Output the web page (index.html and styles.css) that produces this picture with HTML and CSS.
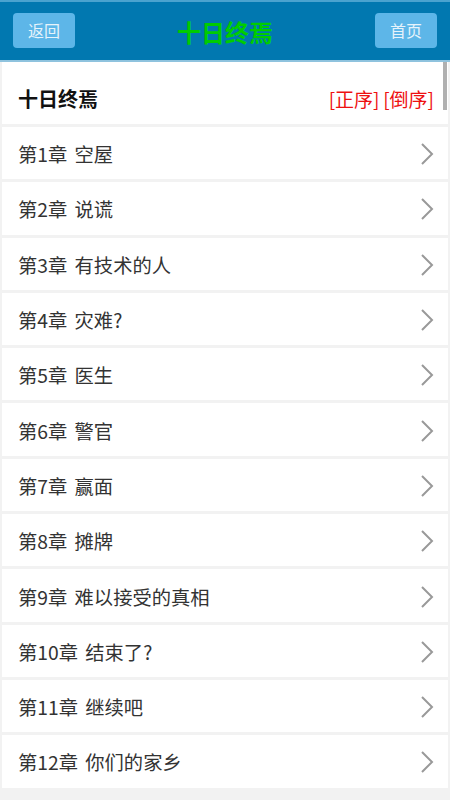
FILE: index.html
```html
<!DOCTYPE html>
<html lang="zh-CN">
<head>
    <meta charset="UTF-8">
    <meta name="viewport" content="width=device-width, initial-scale=1.0">
    <title>十日终焉</title>
    <link rel="stylesheet" href="styles.css">
</head>
<body>

    <header class="topbar">
        <a class="top-btn" href="#">返回</a>
        <h1>十日终焉</h1>
        <a class="top-btn" href="#">首页</a>
    </header>

    <div class="book-head">
        <h2>十日终焉</h2>
        <div class="order">
            <a href="#">[正序]</a>
            <a href="#">[倒序]</a>
        </div>
    </div>

    <ul class="chapters">
        <li><a href="#"><span>第1章 空屋</span><svg viewBox="0 0 14 24"><path d="M2 2 L12 12 L2 22"/></svg></a></li>
        <li><a href="#"><span>第2章 说谎</span><svg viewBox="0 0 14 24"><path d="M2 2 L12 12 L2 22"/></svg></a></li>
        <li><a href="#"><span>第3章 有技术的人</span><svg viewBox="0 0 14 24"><path d="M2 2 L12 12 L2 22"/></svg></a></li>
        <li><a href="#"><span>第4章 灾难?</span><svg viewBox="0 0 14 24"><path d="M2 2 L12 12 L2 22"/></svg></a></li>
        <li><a href="#"><span>第5章 医生</span><svg viewBox="0 0 14 24"><path d="M2 2 L12 12 L2 22"/></svg></a></li>
        <li><a href="#"><span>第6章 警官</span><svg viewBox="0 0 14 24"><path d="M2 2 L12 12 L2 22"/></svg></a></li>
        <li><a href="#"><span>第7章 赢面</span><svg viewBox="0 0 14 24"><path d="M2 2 L12 12 L2 22"/></svg></a></li>
        <li><a href="#"><span>第8章 摊牌</span><svg viewBox="0 0 14 24"><path d="M2 2 L12 12 L2 22"/></svg></a></li>
        <li><a href="#"><span>第9章 难以接受的真相</span><svg viewBox="0 0 14 24"><path d="M2 2 L12 12 L2 22"/></svg></a></li>
        <li><a href="#"><span>第10章 结束了?</span><svg viewBox="0 0 14 24"><path d="M2 2 L12 12 L2 22"/></svg></a></li>
        <li><a href="#"><span>第11章 继续吧</span><svg viewBox="0 0 14 24"><path d="M2 2 L12 12 L2 22"/></svg></a></li>
        <li><a href="#"><span>第12章 你们的家乡</span><svg viewBox="0 0 14 24"><path d="M2 2 L12 12 L2 22"/></svg></a></li>
    </ul>

    <div class="scroll-thumb"></div>

</body>
</html>
```

FILE: styles.css
```css
/* General styles */
body {
    margin: 0;
    padding: 0;
    background-color: #f2f2f2;
    color: #333;
    font-family: 'Noto Sans CJK SC', 'Liberation Sans', sans-serif;
}

a {
    text-decoration: none;
}

/* Top bar */
.topbar {
    height: 58px;
    background-color: #0178b0;
    border-top: 2px solid #4aa3cf;
    border-bottom: 2px solid #8fc3de;
    display: flex;
    align-items: center;
    justify-content: space-between;
    padding: 0 13px;
}

.topbar h1 {
    margin: 0;
    font-size: 24px;
    font-weight: bold;
    color: #00cc00;
}

.top-btn {
    width: 62px;
    height: 35px;
    line-height: 35px;
    text-align: center;
    background-color: #5db6e8;
    color: #e6f3fb;
    font-size: 16px;
    border-radius: 4px;
    margin-top: -2px;
}

/* Book title row */
.book-head {
    height: 62px;
    box-sizing: border-box;
    padding: 10px 14px 0 16px;
    background: #fff;
    margin: 0 2px 3px;
    display: flex;
    align-items: center;
    justify-content: space-between;
}

.book-head h2 {
    margin: 0;
    font-size: 20px;
    font-weight: bold;
    color: #111;
}

.order a {
    color: #ee1111;
    font-size: 19px;
}

/* Chapter list */
.chapters {
    list-style: none;
    margin: 0;
    padding: 0;
}

.chapters li {
    background: #fff;
    margin: 0 2px 3px;
}

.chapters a {
    height: 52.3px;
    box-sizing: border-box;
    padding: 2px 14px 0 16px;
    display: flex;
    align-items: center;
    justify-content: space-between;
    color: #333;
    font-size: 19.3px;
    word-spacing: 3px;
}

.chapters svg {
    width: 14px;
    height: 24px;
    fill: none;
    stroke: #999;
    stroke-width: 2;
}

.scroll-thumb {
    position: fixed;
    top: 62px;
    right: 3px;
    width: 4px;
    height: 48px;
    background: #b0b0b0;
}
```
